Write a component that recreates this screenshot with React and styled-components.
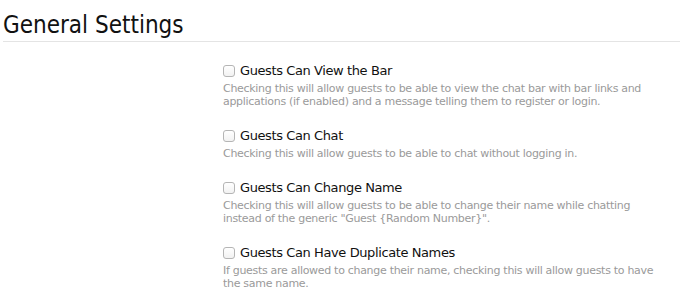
import React from 'react'
import styled, { createGlobalStyle } from 'styled-components'

const settings = [
  {
    title: 'Guests Can View the Bar',
    text: 'Checking this will allow guests to be able to view the chat bar with bar links and applications (if enabled) and a message telling them to register or login.',
  },
  {
    title: 'Guests Can Chat',
    text: 'Checking this will allow guests to be able to chat without logging in.',
  },
  {
    title: 'Guests Can Change Name',
    text: 'Checking this will allow guests to be able to change their name while chatting instead of the generic "Guest {Random Number}".',
  },
  {
    title: 'Guests Can Have Duplicate Names',
    text: 'If guests are allowed to change their name, checking this will allow guests to have the same name.',
  },
]

export default function App() {
  return (
    <>
      <GlobalStyle />
      <Page>
        <Heading>General Settings</Heading>
        <OptionList>
          {settings.map((item) => (
            <Option key={item.title}>
              <OptionLabel>
                <Checkbox type="checkbox" />
                {item.title}
              </OptionLabel>
              <OptionHelp>{item.text}</OptionHelp>
            </Option>
          ))}
        </OptionList>
      </Page>
    </>
  )
}

const GlobalStyle = createGlobalStyle`
  html, body {
    margin: 0;
    background: #fff;
  }
`

const Page = styled.div`
  width: 680px;
  padding-left: 3px;
  font-family: 'DejaVu Sans', Verdana, sans-serif;
`

const Heading = styled.h1`
  margin: 0;
  padding-top: 11px;
  height: 30px;
  font-family: 'DejaVu Sans Condensed', 'DejaVu Sans', sans-serif;
  font-size: 24px;
  font-weight: normal;
  line-height: 28px;
  color: #111;
  border-bottom: 1px solid #e4e4e4;
`

const OptionList = styled.div`
  display: flex;
  flex-direction: column;
  gap: 20px;
  padding: 21px 0 0 220px;
`

const Option = styled.div`
  display: flex;
  flex-direction: column;
  gap: 3px;
  width: 445px;
`

const OptionLabel = styled.label`
  display: flex;
  align-items: center;
  gap: 5px;
  font-size: 13px;
  line-height: 16px;
  letter-spacing: -0.4px;
  color: #111;
`

const Checkbox = styled.input`
  appearance: none;
  margin: 0;
  width: 12px;
  height: 12px;
  border: 1px solid #b5b5b5;
  border-radius: 3px;
  background: linear-gradient(#fff, #f2f2f2);
`

const OptionHelp = styled.div`
  font-size: 11px;
  line-height: 13px;
  letter-spacing: -0.3px;
  color: #9a9a9a;
`
